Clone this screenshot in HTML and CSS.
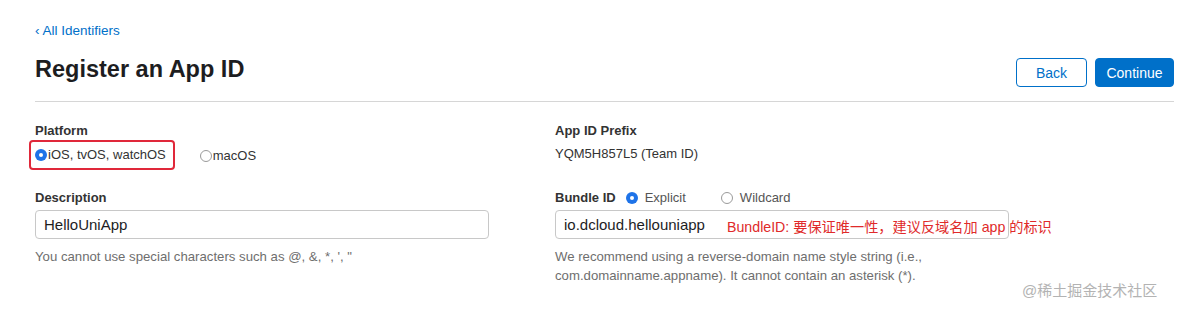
FILE: index.html
```html
<!DOCTYPE html>
<html lang="en">
<head>
  <meta charset="UTF-8" />
  <title>Register an App ID</title>
  <link rel="stylesheet" href="styles.css">
</head>
<body>
  <div class="page">
    <a class="back-link" href="#">&#8249; All Identifiers</a>
    <div class="header">
      <h1>Register an App ID</h1>
      <div class="actions">
        <button class="btn btn-secondary">Back</button>
        <button class="btn btn-primary">Continue</button>
      </div>
    </div>

    <div class="form-grid">
      <div class="field top">
        <div class="label">Platform</div>
        <div class="radio-row">
          <label class="radio highlight"><span class="dot checked"></span>iOS, tvOS, watchOS</label>
          <label class="radio"><span class="dot"></span>macOS</label>
        </div>
      </div>
      <div class="field top">
        <div class="label">App ID Prefix</div>
        <div class="value">YQM5H857L5 (Team ID)</div>
      </div>

      <div class="field">
        <div class="label-row">
          <span class="label">Description</span>
        </div>
        <div class="input-wrap">
          <input class="text-input" type="text" value="HelloUniApp">
        </div>
        <p class="help">You cannot use special characters such as @, &amp;, *, ', "</p>
      </div>
      <div class="field">
        <div class="label-row">
          <span class="label">Bundle ID</span>
          <label class="radio spaced"><span class="dot checked"></span>Explicit</label>
          <label class="radio spaced"><span class="dot"></span>Wildcard</label>
        </div>
        <div class="input-wrap">
          <input class="text-input" type="text" value="io.dcloud.hellouniapp">
          <span class="note">BundleID: 要保证唯一性，建议反域名加 app 的标识</span>
        </div>
        <p class="help">We recommend using a reverse-domain name style string (i.e.,<br>com.domainname.appname). It cannot contain an asterisk (*).</p>
      </div>
    </div>
  </div>
  <div class="watermark">@稀土掘金技术社区</div>
</body>
</html>
```

FILE: styles.css
```css
body {
  margin: 0;
  font-family: "Liberation Sans", Arial, "Noto Sans CJK SC", sans-serif;
  color: #333;
  background: #fff;
}
.page {
  width: 1139px;
  padding: 23px 0 0 35px;
}
.back-link {
  display: block;
  font-size: 13.5px;
  line-height: 16px;
  color: #0070c9;
  text-decoration: none;
}
.header {
  display: flex;
  justify-content: space-between;
  align-items: flex-start;
  height: 62px;
  border-bottom: 1px solid #d6d6d6;
}
h1 {
  margin: 16px 0 0;
  font-size: 23.5px;
  line-height: 28px;
  font-weight: bold;
  color: #1d1d1f;
}
.actions {
  display: flex;
  gap: 8px;
  margin-top: 19px;
}
.btn {
  height: 29px;
  border-radius: 4px;
  font-family: inherit;
  font-size: 14px;
  padding: 0;
  cursor: pointer;
}
.btn-secondary {
  width: 71px;
  background: #fff;
  border: 1px solid #0070c9;
  color: #0070c9;
}
.btn-primary {
  width: 79px;
  background: #0070c9;
  border: 1px solid #0070c9;
  color: #fff;
}
.form-grid {
  display: grid;
  grid-template-columns: 520px 1fr;
  padding-top: 21px;
}
.field.top {
  height: 67px;
}
.label {
  font-size: 13px;
  font-weight: 600;
  line-height: 16px;
  color: #333;
}
.value {
  font-size: 13px;
  line-height: 16px;
  margin-top: 7px;
}
.radio-row {
  display: flex;
  align-items: center;
  gap: 25px;
  margin-top: 9px;
}
.radio {
  display: inline-flex;
  align-items: center;
  font-size: 13px;
  line-height: 16px;
  color: #333;
}
.radio.highlight {
  border: 2px solid #e0283a;
  border-radius: 4px;
  padding: 5px 7px 5px 4px;
  margin: -8px 0 -6px -6px;
}
.radio.spaced {
  margin-left: 10px;
  margin-right: 25px;
  color: #555;
}
.radio.spaced .dot {
  margin-right: 7px;
}
.dot {
  width: 12px;
  height: 12px;
  box-sizing: border-box;
  border-radius: 50%;
  border: 1px solid #9a9a9a;
  background: #fff;
  margin-right: 1px;
  position: relative;
}
.dot.checked {
  border: none;
  background: #1e73e8;
}
.dot.checked::after {
  content: "";
  position: absolute;
  left: 4px;
  top: 4px;
  width: 4px;
  height: 4px;
  border-radius: 50%;
  background: #fff;
}
.label-row {
  display: flex;
  align-items: center;
  height: 16px;
}
.input-wrap {
  position: relative;
  width: 454px;
  margin-top: 4px;
}
.text-input {
  display: block;
  width: 454px;
  height: 29px;
  box-sizing: border-box;
  border: 1px solid #c8c8c8;
  border-radius: 4px;
  padding: 0 8px;
  font-family: inherit;
  font-size: 15px;
  color: #1d1d1f;
}
.note {
  position: absolute;
  left: 172px;
  top: 6px;
  white-space: nowrap;
  font-size: 14.2px;
  color: #e02a2a;
}
.help {
  margin: 8px 0 0;
  font-size: 13.2px;
  line-height: 19px;
  color: #6e6e6e;
}
.watermark {
  position: absolute;
  left: 1022px;
  top: 279px;
  font-size: 15px;
  color: #b3b3b3;
}
```
